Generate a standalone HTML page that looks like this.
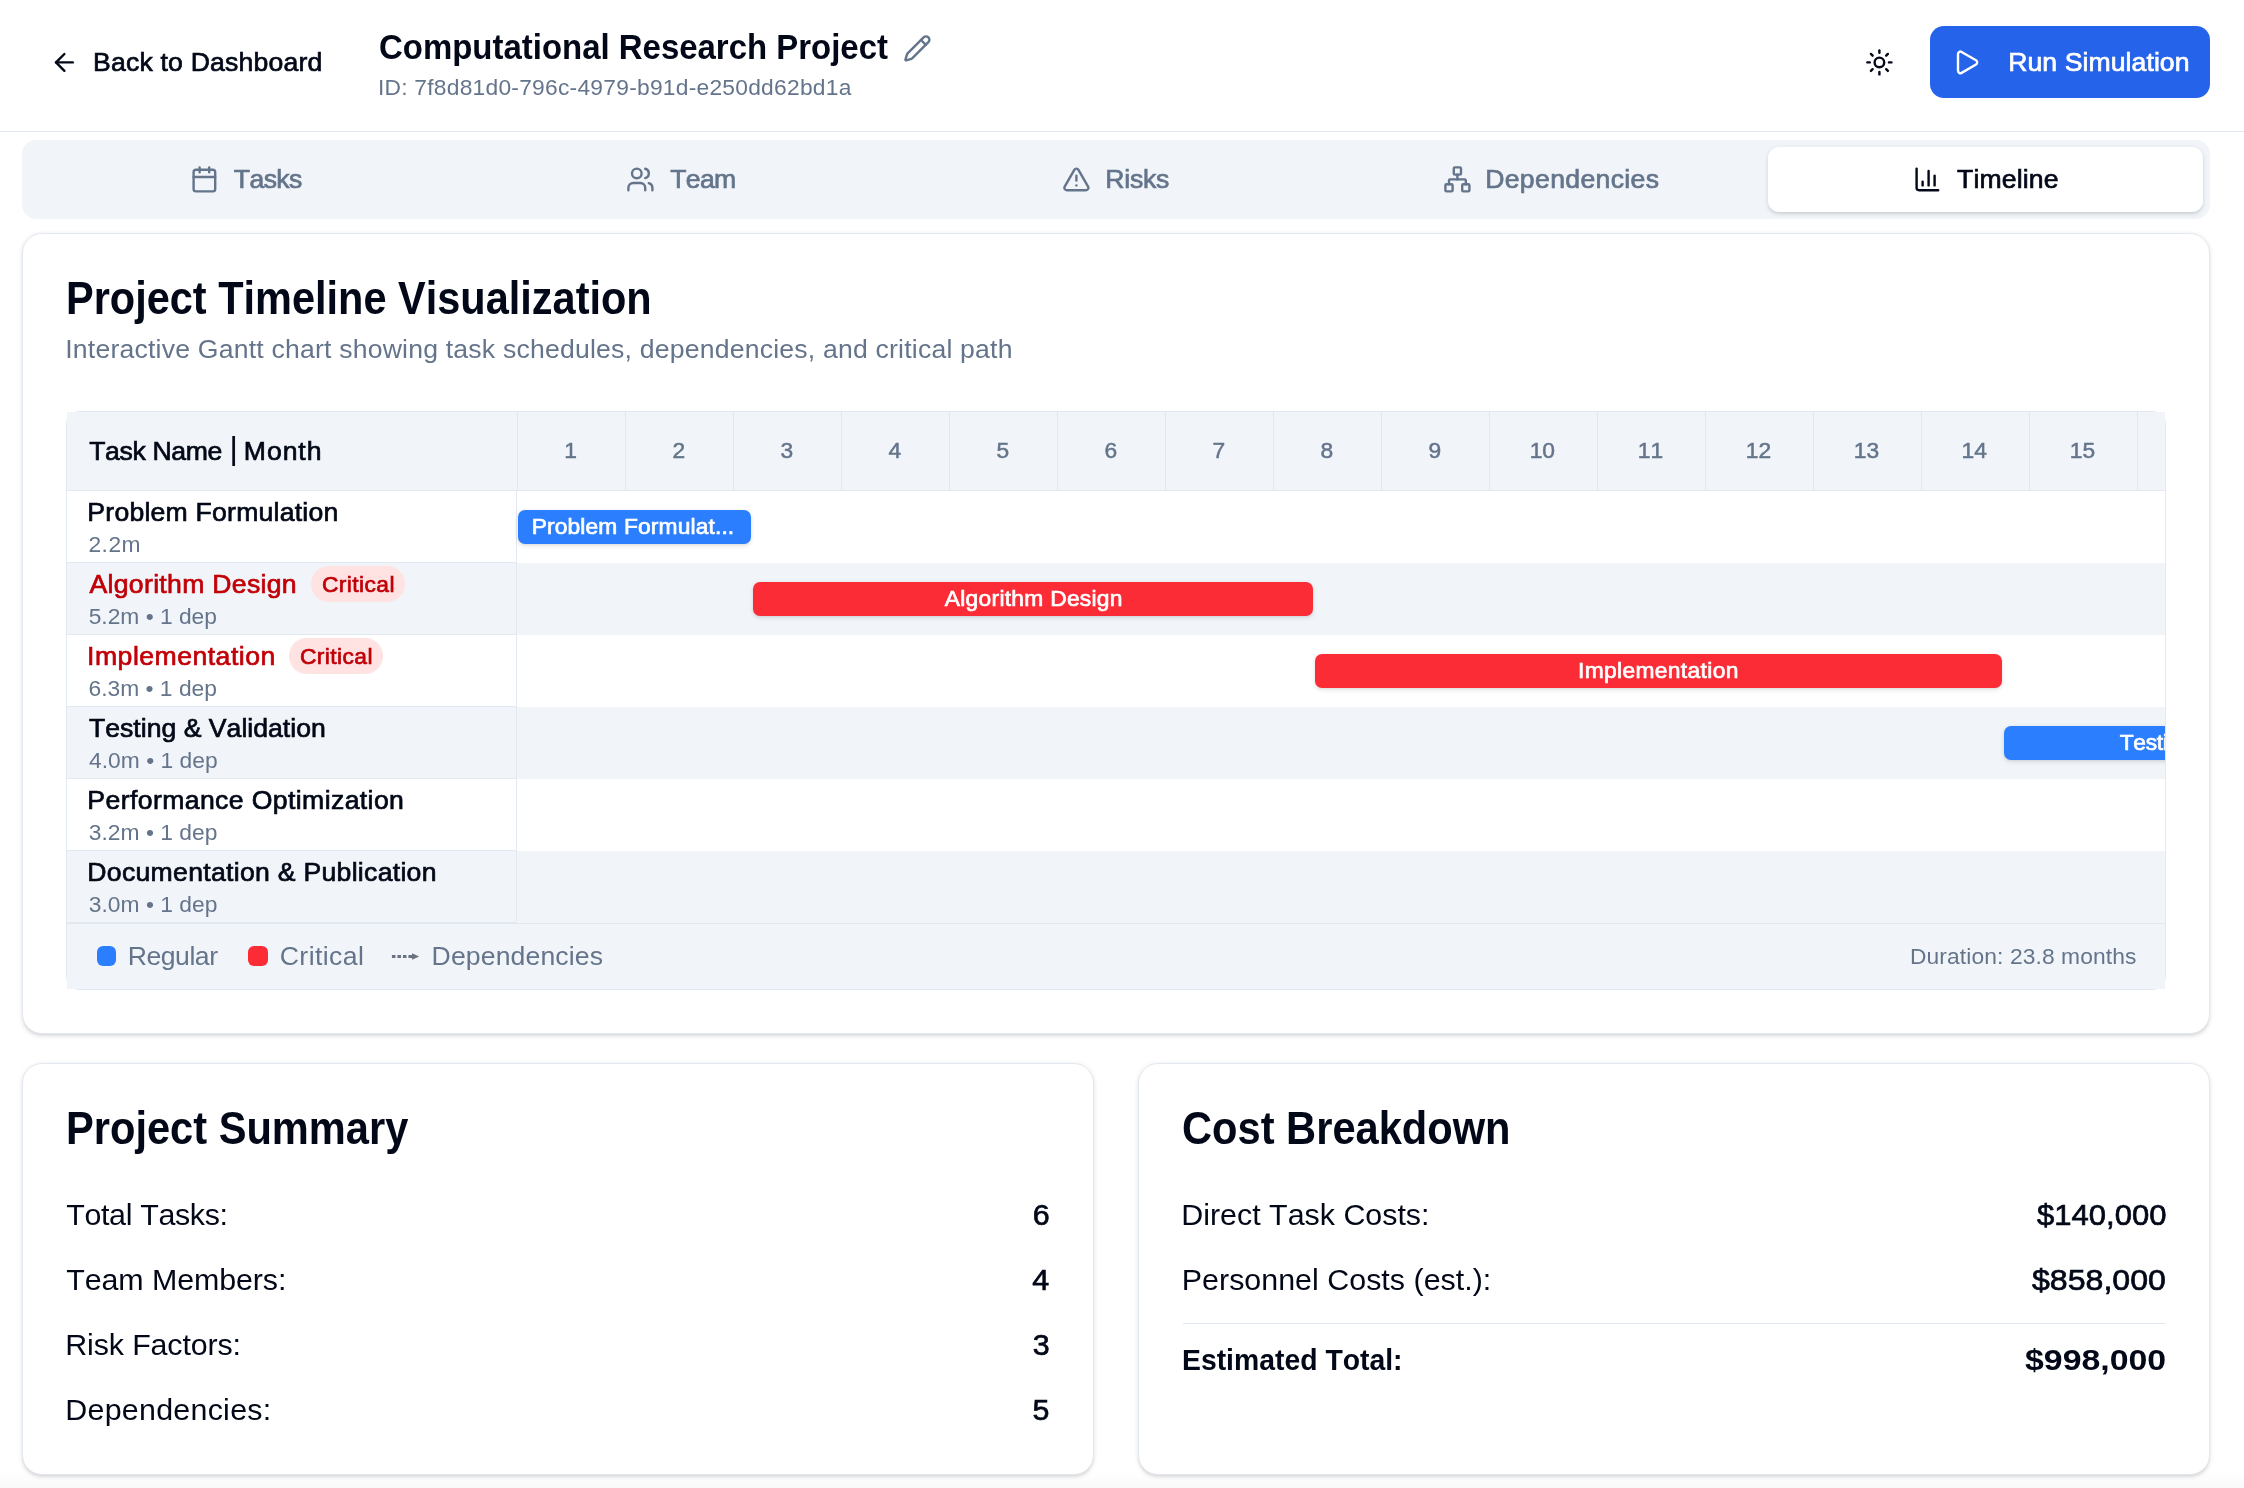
<!DOCTYPE html>
<html lang="en">
<head>
<meta charset="utf-8">
<title>Computational Research Project - Timeline</title>
<style>
html,body{margin:0;padding:0;background:#fff}
body{width:2244px;height:1488px;position:relative;overflow:hidden;font-family:"Liberation Sans",sans-serif;font-kerning:none;-webkit-font-smoothing:antialiased}
.t{position:absolute;white-space:pre;line-height:1;display:block}
.b{position:absolute;display:block}
</style>
</head>
<body>
<div id="app" style="position:absolute;left:0;top:0;width:2244px;height:1488px;will-change:transform">
<div class="b" style="left:0px;top:131px;width:2244.00px;height:1.00px;background:#e2e8f0"></div>
<svg class="b" style="left:49.7px;top:48.1px" width="28.8" height="28.8" viewBox="0 0 24 24" fill="none" stroke="#020817" stroke-width="2" stroke-linecap="round" stroke-linejoin="round"><path d="m12 19-7-7 7-7"/><path d="M19 12H5"/></svg>
<span class="t" style="left:92.97px;top:49.00px;font-size:26.6px;color:#020817;letter-spacing:0.198px;-webkit-text-stroke:0.7px #020817;">Back to Dashboard</span>
<span class="t" style="left:378.85px;top:30.00px;font-size:34.2px;color:#020817;transform:scaleX(0.9637);transform-origin:0 0;font-weight:700;">Computational Research Project</span>
<svg class="b" style="left:903.2px;top:34px" width="28.8" height="28.8" viewBox="0 0 24 24" fill="none" stroke="#64748b" stroke-width="2" stroke-linecap="round" stroke-linejoin="round"><path d="M21.174 6.812a1 1 0 0 0-3.986-3.987L3.842 16.174a2 2 0 0 0-.5.83l-1.321 4.352a.5.5 0 0 0 .623.622l4.353-1.32a2 2 0 0 0 .83-.497z"/><path d="m15 5 4 4"/></svg>
<span class="t" style="left:377.90px;top:76.00px;font-size:22.8px;color:#64748b;letter-spacing:0.244px;">ID: 7f8d81d0-796c-4979-b91d-e250dd62bd1a</span>
<svg class="b" style="left:1865px;top:48px" width="28.8" height="28.8" viewBox="0 0 24 24" fill="none" stroke="#020817" stroke-width="2" stroke-linecap="round" stroke-linejoin="round"><circle cx="12" cy="12" r="4"/><path d="M12 2v2"/><path d="M12 20v2"/><path d="m4.93 4.93 1.41 1.41"/><path d="m17.66 17.66 1.41 1.41"/><path d="M2 12h2"/><path d="M20 12h2"/><path d="m6.34 17.66-1.41 1.41"/><path d="m19.07 4.93-1.41 1.41"/></svg>
<div class="b" style="left:1930px;top:26px;width:280.00px;height:72.00px;background:#2563eb;border-radius:14px"></div>
<svg class="b" style="left:1951.8px;top:48px" width="28.8" height="28.8" viewBox="0 0 24 24" fill="none" stroke="#fff" stroke-width="2" stroke-linecap="round" stroke-linejoin="round"><path d="M5 5a2 2 0 0 1 3.008-1.728l11.997 6.998a2 2 0 0 1 .003 3.458l-12 7A2 2 0 0 1 5 19z"/></svg>
<span class="t" style="left:2008.17px;top:49.00px;font-size:26.6px;color:#fff;letter-spacing:0.079px;-webkit-text-stroke:0.7px #fff;">Run Simulation</span>
<div class="b" style="left:21.8px;top:140.1px;width:2188.10px;height:78.70px;background:#f1f5f9;border-radius:14.4px"></div>
<div class="b" style="left:1768px;top:146.9px;width:435.20px;height:65.20px;background:#fff;border-radius:11px;box-shadow:0 1.8px 5.4px rgba(0,0,0,.1),0 1.8px 3.6px -1.8px rgba(0,0,0,.1)"></div>
<svg class="b" style="left:189.9px;top:164.7px" width="28.8" height="28.8" viewBox="0 0 24 24" fill="none" stroke="#64748b" stroke-width="2" stroke-linecap="round" stroke-linejoin="round"><path d="M8 2v4"/><path d="M16 2v4"/><rect width="18" height="18" x="3" y="4" rx="2"/><path d="M3 10h18"/></svg>
<span class="t" style="left:233.75px;top:166.00px;font-size:26.6px;color:#64748b;letter-spacing:-0.571px;-webkit-text-stroke:0.7px #64748b;">Tasks</span>
<svg class="b" style="left:625.8px;top:164.7px" width="28.8" height="28.8" viewBox="0 0 24 24" fill="none" stroke="#64748b" stroke-width="2" stroke-linecap="round" stroke-linejoin="round"><path d="M16 21v-2a4 4 0 0 0-4-4H6a4 4 0 0 0-4 4v2"/><circle cx="9" cy="7" r="4"/><path d="M22 21v-2a4 4 0 0 0-3-3.87"/><path d="M16 3.13a4 4 0 0 1 0 7.75"/></svg>
<span class="t" style="left:670.35px;top:166.00px;font-size:26.6px;color:#64748b;letter-spacing:-0.748px;-webkit-text-stroke:0.7px #64748b;">Team</span>
<svg class="b" style="left:1061.7px;top:164.7px" width="28.8" height="28.8" viewBox="0 0 24 24" fill="none" stroke="#64748b" stroke-width="2" stroke-linecap="round" stroke-linejoin="round"><path d="m21.73 18-8-14a2 2 0 0 0-3.48 0l-8 14A2 2 0 0 0 4 21h16a2 2 0 0 0 1.73-3"/><path d="M12 9v4"/><path d="M12 17h.01"/></svg>
<span class="t" style="left:1105.17px;top:166.00px;font-size:26.6px;color:#64748b;letter-spacing:-0.194px;-webkit-text-stroke:0.7px #64748b;">Risks</span>
<svg class="b" style="left:1442.6px;top:164.7px" width="28.8" height="28.8" viewBox="0 0 24 24" fill="none" stroke="#64748b" stroke-width="2" stroke-linecap="round" stroke-linejoin="round"><rect x="16" y="16" width="6" height="6" rx="1"/><rect x="2" y="16" width="6" height="6" rx="1"/><rect x="9" y="2" width="6" height="6" rx="1"/><path d="M5 16v-3a1 1 0 0 1 1-1h12a1 1 0 0 1 1 1v3"/><path d="M12 12V8"/></svg>
<span class="t" style="left:1485.17px;top:166.00px;font-size:26.6px;color:#64748b;letter-spacing:0.352px;-webkit-text-stroke:0.7px #64748b;">Dependencies</span>
<svg class="b" style="left:1913px;top:164.7px" width="28.8" height="28.8" viewBox="0 0 24 24" fill="none" stroke="#020817" stroke-width="2" stroke-linecap="round" stroke-linejoin="round"><path d="M3 3v16a2 2 0 0 0 2 2h16"/><path d="M18 17V9"/><path d="M13 17V5"/><path d="M8 17v-3"/></svg>
<span class="t" style="left:1957.05px;top:166.00px;font-size:26.6px;color:#020817;letter-spacing:0.152px;-webkit-text-stroke:0.7px #020817;">Timeline</span>
<div class="b" style="left:22px;top:233px;width:2188.00px;height:801.00px;background:#fff;border:1px solid #e2e8f0;border-radius:20px;box-shadow:0 1.8px 5.4px rgba(0,0,0,.1),0 1.8px 3.6px -1.8px rgba(0,0,0,.1);box-sizing:border-box"></div>
<span class="t" style="left:65.82px;top:276.00px;font-size:45.6px;color:#020817;transform:scaleX(0.9101);transform-origin:0 0;font-weight:700;">Project Timeline Visualization</span>
<span class="t" style="left:65.25px;top:336.00px;font-size:26.6px;color:#64748b;letter-spacing:0.204px;">Interactive Gantt chart showing task schedules, dependencies, and critical path</span>
<div class="b" style="left:66px;top:411px;width:2100.00px;height:579.00px;border:1px solid #e2e8f0;border-radius:13px;box-sizing:border-box"></div>
<div class="b" style="left:67px;top:412px;width:2098.00px;height:78.00px;background:#f1f5f9"></div>
<div class="b" style="left:67px;top:563px;width:2098.00px;height:72.00px;background:#f1f5f9"></div>
<div class="b" style="left:67px;top:707px;width:2098.00px;height:72.00px;background:#f1f5f9"></div>
<div class="b" style="left:67px;top:851px;width:2098.00px;height:72.00px;background:#f1f5f9"></div>
<div class="b" style="left:67px;top:924px;width:2098.00px;height:65.00px;background:#f1f5f9"></div>
<div class="b" style="left:67px;top:490px;width:2098.00px;height:1.00px;background:#e2e8f0"></div>
<div class="b" style="left:67px;top:562px;width:450.00px;height:1.00px;background:#e2e8f0"></div>
<div class="b" style="left:67px;top:634px;width:450.00px;height:1.00px;background:#e2e8f0"></div>
<div class="b" style="left:67px;top:706px;width:450.00px;height:1.00px;background:#e2e8f0"></div>
<div class="b" style="left:67px;top:778px;width:450.00px;height:1.00px;background:#e2e8f0"></div>
<div class="b" style="left:67px;top:850px;width:450.00px;height:1.00px;background:#e2e8f0"></div>
<div class="b" style="left:67px;top:922px;width:450.00px;height:1.00px;background:#e2e8f0"></div>
<div class="b" style="left:67px;top:923px;width:2098.00px;height:1.00px;background:#e2e8f0"></div>
<div class="b" style="left:516px;top:491px;width:1.00px;height:432.00px;background:#e2e8f0"></div>
<div class="b" style="left:516.5px;top:412px;width:1.00px;height:78.00px;background:#e2e8f0"></div>
<div class="b" style="left:624.6px;top:412px;width:1.00px;height:78.00px;background:#e2e8f0"></div>
<div class="b" style="left:732.6px;top:412px;width:1.00px;height:78.00px;background:#e2e8f0"></div>
<div class="b" style="left:840.6px;top:412px;width:1.00px;height:78.00px;background:#e2e8f0"></div>
<div class="b" style="left:948.6px;top:412px;width:1.00px;height:78.00px;background:#e2e8f0"></div>
<div class="b" style="left:1056.6px;top:412px;width:1.00px;height:78.00px;background:#e2e8f0"></div>
<div class="b" style="left:1164.6px;top:412px;width:1.00px;height:78.00px;background:#e2e8f0"></div>
<div class="b" style="left:1272.6px;top:412px;width:1.00px;height:78.00px;background:#e2e8f0"></div>
<div class="b" style="left:1380.6px;top:412px;width:1.00px;height:78.00px;background:#e2e8f0"></div>
<div class="b" style="left:1488.6px;top:412px;width:1.00px;height:78.00px;background:#e2e8f0"></div>
<div class="b" style="left:1596.6px;top:412px;width:1.00px;height:78.00px;background:#e2e8f0"></div>
<div class="b" style="left:1704.6px;top:412px;width:1.00px;height:78.00px;background:#e2e8f0"></div>
<div class="b" style="left:1812.6px;top:412px;width:1.00px;height:78.00px;background:#e2e8f0"></div>
<div class="b" style="left:1920.6px;top:412px;width:1.00px;height:78.00px;background:#e2e8f0"></div>
<div class="b" style="left:2028.6px;top:412px;width:1.00px;height:78.00px;background:#e2e8f0"></div>
<div class="b" style="left:2136.6px;top:412px;width:1.00px;height:78.00px;background:#e2e8f0"></div>
<span class="t" style="left:89.25px;top:438.00px;font-size:26.6px;color:#020817;letter-spacing:-0.376px;-webkit-text-stroke:0.7px #020817;">Task Name</span>
<span class="t" style="left:229.44px;top:432.00px;font-size:32px;color:#020817;-webkit-text-stroke:0.2px #020817;">|</span>
<span class="t" style="left:243.87px;top:438.00px;font-size:26.6px;color:#020817;letter-spacing:0.920px;-webkit-text-stroke:0.7px #020817;">Month</span>
<span class="t" style="left:564.15px;top:439.00px;font-size:22.8px;color:#64748b;-webkit-text-stroke:0.5px #64748b;">1</span>
<span class="t" style="left:672.46px;top:439.00px;font-size:22.8px;color:#64748b;-webkit-text-stroke:0.5px #64748b;">2</span>
<span class="t" style="left:780.53px;top:439.00px;font-size:22.8px;color:#64748b;-webkit-text-stroke:0.5px #64748b;">3</span>
<span class="t" style="left:888.53px;top:439.00px;font-size:22.8px;color:#64748b;-webkit-text-stroke:0.5px #64748b;">4</span>
<span class="t" style="left:996.48px;top:439.00px;font-size:22.8px;color:#64748b;-webkit-text-stroke:0.5px #64748b;">5</span>
<span class="t" style="left:1104.38px;top:439.00px;font-size:22.8px;color:#64748b;-webkit-text-stroke:0.5px #64748b;">6</span>
<span class="t" style="left:1212.45px;top:439.00px;font-size:22.8px;color:#64748b;-webkit-text-stroke:0.5px #64748b;">7</span>
<span class="t" style="left:1320.46px;top:439.00px;font-size:22.8px;color:#64748b;-webkit-text-stroke:0.5px #64748b;">8</span>
<span class="t" style="left:1428.47px;top:439.00px;font-size:22.8px;color:#64748b;-webkit-text-stroke:0.5px #64748b;">9</span>
<span class="t" style="left:1529.70px;top:439.00px;font-size:22.8px;color:#64748b;-webkit-text-stroke:0.5px #64748b;">10</span>
<span class="t" style="left:1637.81px;top:439.00px;font-size:22.8px;color:#64748b;-webkit-text-stroke:0.5px #64748b;">11</span>
<span class="t" style="left:1745.82px;top:439.00px;font-size:22.8px;color:#64748b;-webkit-text-stroke:0.5px #64748b;">12</span>
<span class="t" style="left:1853.75px;top:439.00px;font-size:22.8px;color:#64748b;-webkit-text-stroke:0.5px #64748b;">13</span>
<span class="t" style="left:1961.59px;top:439.00px;font-size:22.8px;color:#64748b;-webkit-text-stroke:0.5px #64748b;">14</span>
<span class="t" style="left:2069.73px;top:439.00px;font-size:22.8px;color:#64748b;-webkit-text-stroke:0.5px #64748b;">15</span>
<span class="t" style="left:87.37px;top:499.00px;font-size:26.6px;color:#020817;letter-spacing:0.229px;-webkit-text-stroke:0.7px #020817;">Problem Formulation</span>
<span class="t" style="left:88.45px;top:533.00px;font-size:22.8px;color:#64748b;letter-spacing:0.487px;">2.2m</span>
<span class="t" style="left:89.50px;top:571.00px;font-size:26.6px;color:#c10007;letter-spacing:0.309px;-webkit-text-stroke:0.7px #c10007;">Algorithm Design</span>
<span class="t" style="left:88.69px;top:605.00px;font-size:22.8px;color:#64748b;letter-spacing:-0.011px;">5.2m • 1 dep</span>
<div class="b" style="left:310.9px;top:565.9px;width:94.20px;height:35.90px;background:#ffe2e2;border-radius:18px"></div>
<span class="t" style="left:321.89px;top:573.00px;font-size:22.8px;color:#c10007;letter-spacing:0.416px;-webkit-text-stroke:0.7px #c10007;">Critical</span>
<span class="t" style="left:87.10px;top:643.00px;font-size:26.6px;color:#c10007;letter-spacing:0.486px;-webkit-text-stroke:0.7px #c10007;">Implementation</span>
<span class="t" style="left:88.44px;top:677.00px;font-size:22.8px;color:#64748b;letter-spacing:0.011px;">6.3m • 1 dep</span>
<div class="b" style="left:288.9px;top:637.9px;width:94.20px;height:35.90px;background:#ffe2e2;border-radius:18px"></div>
<span class="t" style="left:299.89px;top:645.00px;font-size:22.8px;color:#c10007;letter-spacing:0.416px;-webkit-text-stroke:0.7px #c10007;">Critical</span>
<span class="t" style="left:88.95px;top:715.00px;font-size:26.6px;color:#020817;letter-spacing:0.018px;-webkit-text-stroke:0.7px #020817;">Testing &amp; Validation</span>
<span class="t" style="left:89.08px;top:749.00px;font-size:22.8px;color:#64748b;letter-spacing:0.017px;">4.0m • 1 dep</span>
<span class="t" style="left:87.37px;top:787.00px;font-size:26.6px;color:#020817;letter-spacing:0.396px;-webkit-text-stroke:0.7px #020817;">Performance Optimization</span>
<span class="t" style="left:88.73px;top:821.00px;font-size:22.8px;color:#64748b;letter-spacing:0.030px;">3.2m • 1 dep</span>
<span class="t" style="left:87.37px;top:859.00px;font-size:26.6px;color:#020817;letter-spacing:0.294px;-webkit-text-stroke:0.7px #020817;">Documentation &amp; Publication</span>
<span class="t" style="left:88.73px;top:893.00px;font-size:22.8px;color:#64748b;letter-spacing:0.030px;">3.0m • 1 dep</span>
<div class="b" style="left:518px;top:510px;width:233.00px;height:34.00px;background:#2b7fff;box-shadow:0 1.8px 5.4px rgba(0,0,0,.1),0 1.8px 3.6px -1.8px rgba(0,0,0,.1);border-radius:7px;"></div>
<div class="b" style="left:753px;top:582px;width:560.00px;height:34.00px;background:#fb2c36;box-shadow:0 1.8px 5.4px rgba(0,0,0,.1),0 1.8px 3.6px -1.8px rgba(0,0,0,.1);border-radius:7px;"></div>
<div class="b" style="left:1315px;top:654px;width:687.00px;height:34.00px;background:#fb2c36;box-shadow:0 1.8px 5.4px rgba(0,0,0,.1),0 1.8px 3.6px -1.8px rgba(0,0,0,.1);border-radius:7px;"></div>
<div class="b" style="left:1990px;top:716px;width:175px;height:56px;overflow:hidden">
<div class="b" style="left:14px;top:10px;width:296.00px;height:34.00px;background:#2b7fff;box-shadow:0 1.8px 5.4px rgba(0,0,0,.1),0 1.8px 3.6px -1.8px rgba(0,0,0,.1);border-radius:7px;"></div>
<span class="t" style="left:129.74px;top:15.00px;font-size:22.8px;color:#fff;letter-spacing:-0.336px;-webkit-text-stroke:0.7px #fff;">Testing &amp; Validation</span>
</div>
<span class="t" style="left:531.68px;top:515.00px;font-size:22.8px;color:#fff;letter-spacing:0.131px;-webkit-text-stroke:0.7px #fff;">Problem Formulat...</span>
<span class="t" style="left:944.81px;top:587.00px;font-size:22.8px;color:#fff;letter-spacing:0.275px;-webkit-text-stroke:0.7px #fff;">Algorithm Design</span>
<span class="t" style="left:1577.95px;top:659.00px;font-size:22.8px;color:#fff;letter-spacing:0.354px;-webkit-text-stroke:0.7px #fff;">Implementation</span>
<div class="b" style="left:96.8px;top:945.6px;width:19.60px;height:20.40px;background:#2b7fff;border-radius:6px"></div>
<span class="t" style="left:127.72px;top:943.00px;font-size:26.6px;color:#64748b;letter-spacing:-0.471px;">Regular</span>
<div class="b" style="left:248px;top:945.6px;width:20.00px;height:20.40px;background:#fb2c36;border-radius:6px"></div>
<span class="t" style="left:279.75px;top:943.00px;font-size:26.6px;color:#64748b;letter-spacing:0.407px;">Critical</span>
<svg class="b" style="left:390px;top:945px" width="32" height="22" viewBox="0 0 32 22"><path d="M1.9 11.5h21" stroke="#6b7280" stroke-width="2.9" stroke-dasharray="3.6 1.9" fill="none"/><path d="M22 8.200 29.200 11.500 22 14.800z" fill="#6b7280"/></svg>
<span class="t" style="left:431.62px;top:943.00px;font-size:26.6px;color:#64748b;letter-spacing:0.125px;">Dependencies</span>
<span class="t" style="left:1910.03px;top:945.00px;font-size:22.8px;color:#64748b;letter-spacing:0.103px;">Duration: 23.8 months</span>
<div class="b" style="left:22px;top:1063px;width:1072.00px;height:412.00px;background:#fff;border:1px solid #e2e8f0;border-radius:20px;box-shadow:0 1.8px 5.4px rgba(0,0,0,.1),0 1.8px 3.6px -1.8px rgba(0,0,0,.1);box-sizing:border-box"></div>
<span class="t" style="left:65.52px;top:1106.00px;font-size:45.6px;color:#020817;transform:scaleX(0.9129);transform-origin:0 0;font-weight:700;">Project Summary</span>
<span class="t" style="left:66.22px;top:1199.00px;font-size:30.4px;color:#020817;letter-spacing:-0.336px;">Total Tasks:</span>
<span class="t" style="left:1032.68px;top:1199.00px;font-size:30.4px;color:#020817;-webkit-text-stroke:0.7px #020817;">6</span>
<span class="t" style="left:66.22px;top:1264.00px;font-size:30.4px;color:#020817;letter-spacing:-0.086px;">Team Members:</span>
<span class="t" style="left:1032.23px;top:1264.00px;font-size:30.4px;color:#020817;-webkit-text-stroke:0.7px #020817;">4</span>
<span class="t" style="left:65.31px;top:1329.00px;font-size:30.4px;color:#020817;letter-spacing:-0.132px;">Risk Factors:</span>
<span class="t" style="left:1032.68px;top:1329.00px;font-size:30.4px;color:#020817;-webkit-text-stroke:0.7px #020817;">3</span>
<span class="t" style="left:65.31px;top:1394.00px;font-size:30.4px;color:#020817;letter-spacing:0.263px;">Dependencies:</span>
<span class="t" style="left:1032.62px;top:1394.00px;font-size:30.4px;color:#020817;-webkit-text-stroke:0.7px #020817;">5</span>
<div class="b" style="left:1138px;top:1063px;width:1072.00px;height:412.00px;background:#fff;border:1px solid #e2e8f0;border-radius:20px;box-shadow:0 1.8px 5.4px rgba(0,0,0,.1),0 1.8px 3.6px -1.8px rgba(0,0,0,.1);box-sizing:border-box"></div>
<span class="t" style="left:1182.09px;top:1106.00px;font-size:45.6px;color:#020817;transform:scaleX(0.9133);transform-origin:0 0;font-weight:700;">Cost Breakdown</span>
<span class="t" style="left:1181.31px;top:1199.00px;font-size:30.4px;color:#020817;letter-spacing:-0.002px;">Direct Task Costs:</span>
<span class="t" style="left:2036.62px;top:1199.00px;font-size:30.4px;color:#020817;transform:scaleX(1.0208);transform-origin:0 0;-webkit-text-stroke:0.7px #020817;">$140,000</span>
<span class="t" style="left:1181.81px;top:1264.00px;font-size:30.4px;color:#020817;letter-spacing:0.018px;">Personnel Costs (est.):</span>
<span class="t" style="left:2032.12px;top:1264.00px;font-size:30.4px;color:#020817;transform:scaleX(1.0565);transform-origin:0 0;-webkit-text-stroke:0.7px #020817;">$858,000</span>
<div class="b" style="left:1183px;top:1323px;width:983.00px;height:1.00px;background:#e2e8f0"></div>
<span class="t" style="left:1182.10px;top:1344.00px;font-size:30.4px;color:#020817;transform:scaleX(0.9330);transform-origin:0 0;font-weight:700;">Estimated Total:</span>
<span class="t" style="left:2025.45px;top:1344.00px;font-size:30.4px;color:#020817;transform:scaleX(1.1131);transform-origin:0 0;font-weight:700;">$998,000</span>
<div class="b" style="left:0px;top:1472px;width:2244.00px;height:16.00px;background:linear-gradient(to bottom,rgba(0,0,0,0),rgba(0,0,0,.022))"></div>
</div>
</body>
</html>
